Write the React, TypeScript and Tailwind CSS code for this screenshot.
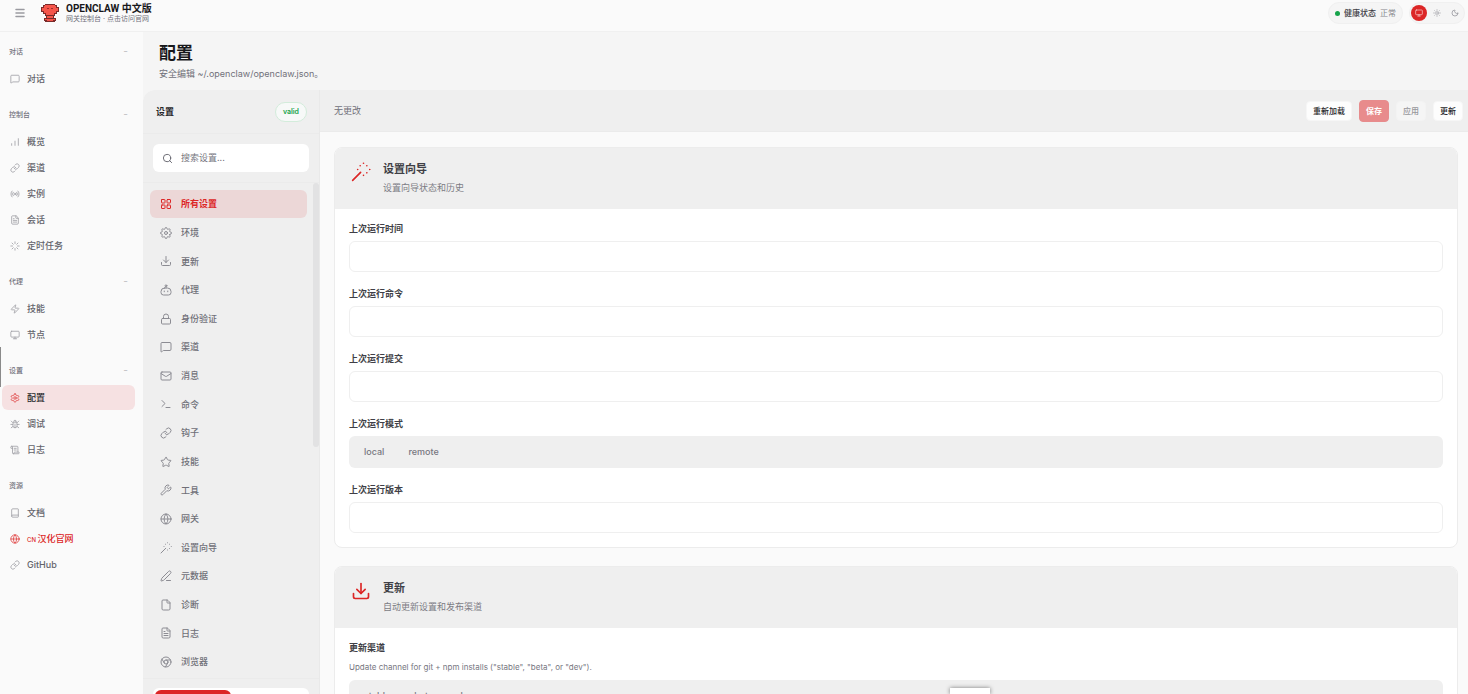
import type { ReactNode } from "react";
import {
  Book,
  Chrome,
  Download,
  File,
  FileText,
  Globe,
  LayoutGrid,
  Link as LinkIcon,
  Loader,
  Lock,
  Mail,
  Menu,
  MessageSquare,
  Monitor,
  Moon,
  PenLine,
  Radio,
  ScrollText,
  Search,
  Star,
  Sun,
  Terminal,
  Wrench,
  Zap,
  type LucideIcon,
} from "lucide-react";

type IconProps = { className?: string; strokeWidth?: number };
type IconType = LucideIcon | ((props: IconProps) => ReactNode);
type NavItem = { label: string; icon: IconType; active?: boolean; accent?: boolean };

function StrokeIcon({ className, strokeWidth = 2, children }: IconProps & { children: ReactNode }) {
  return (
    <svg
      className={className}
      viewBox="0 0 24 24"
      fill="none"
      stroke="currentColor"
      strokeWidth={strokeWidth}
      strokeLinecap="round"
      strokeLinejoin="round"
      aria-hidden="true"
    >
      {children}
    </svg>
  );
}

function BarsIcon(props: IconProps) {
  return (
    <StrokeIcon {...props}>
      <path d="M4 20v-4M12 20V10M20 20V4" />
    </StrokeIcon>
  );
}

function WandIcon(props: IconProps) {
  return (
    <StrokeIcon {...props}>
      <path d="M2 22l9.5-9.5" />
      <path d="M15 1.5h.01M19 4.5h.01M22.5 9h.01M19 13h.01M15 16h.01M11 4.5h.01M8 9h.01" />
    </StrokeIcon>
  );
}

function CogIcon(props: IconProps) {
  return (
    <StrokeIcon {...props}>
      <path d="M12.22 2h-.44a2 2 0 0 0-2 2v.18a2 2 0 0 1-1 1.73l-.43.25a2 2 0 0 1-2 0l-.15-.08a2 2 0 0 0-2.73.73l-.22.38a2 2 0 0 0 .73 2.73l.15.1a2 2 0 0 1 1 1.72v.51a2 2 0 0 1-1 1.74l-.15.09a2 2 0 0 0-.73 2.73l.22.38a2 2 0 0 0 2.73.73l.15-.08a2 2 0 0 1 2 0l.43.25a2 2 0 0 1 1 1.73V20a2 2 0 0 0 2 2h.44a2 2 0 0 0 2-2v-.18a2 2 0 0 1 1-1.73l.43-.25a2 2 0 0 1 2 0l.15.08a2 2 0 0 0 2.73-.73l.22-.39a2 2 0 0 0-.73-2.73l-.15-.08a2 2 0 0 1-1-1.74v-.5a2 2 0 0 1 1-1.74l.15-.09a2 2 0 0 0 .73-2.73l-.22-.38a2 2 0 0 0-2.73-.73l-.15.08a2 2 0 0 1-2 0l-.43-.25a2 2 0 0 1-1-1.73V4a2 2 0 0 0-2-2z" />
      <circle cx="12" cy="12" r="3" />
    </StrokeIcon>
  );
}

function GearIcon(props: IconProps) {
  return (
    <StrokeIcon {...props}>
      <circle cx="12" cy="12" r="3" />
      <path d="M19.4 15a1.65 1.65 0 0 0 .33 1.82l.06.06a2 2 0 1 1-2.83 2.83l-.06-.06a1.65 1.65 0 0 0-1.82-.33 1.65 1.65 0 0 0-1 1.51V21a2 2 0 0 1-4 0v-.09A1.65 1.65 0 0 0 9 19.4a1.65 1.65 0 0 0-1.82.33l-.06.06a2 2 0 1 1-2.83-2.83l.06-.06a1.65 1.65 0 0 0 .33-1.82 1.65 1.65 0 0 0-1.51-1H3a2 2 0 0 1 0-4h.09A1.65 1.65 0 0 0 4.6 9a1.65 1.65 0 0 0-.33-1.82l-.06-.06a2 2 0 1 1 2.83-2.83l.06.06a1.65 1.65 0 0 0 1.82.33H9a1.65 1.65 0 0 0 1-1.51V3a2 2 0 0 1 4 0v.09a1.65 1.65 0 0 0 1 1.51 1.65 1.65 0 0 0 1.82-.33l.06-.06a2 2 0 1 1 2.83 2.83l-.06.06a1.65 1.65 0 0 0-.33 1.82V9a1.65 1.65 0 0 0 1.51 1H21a2 2 0 0 1 0 4h-.09a1.65 1.65 0 0 0-1.51 1z" />
    </StrokeIcon>
  );
}

function RobotIcon(props: IconProps) {
  return (
    <StrokeIcon {...props}>
      <circle cx="12" cy="3.5" r="1.8" />
      <path d="M12 5.5V8M9 8h6a7 7 0 0 1 7 7v2a5 5 0 0 1-5 5H7a5 5 0 0 1-5-5v-2a7 7 0 0 1 7-7z" />
      <path d="M8.5 14v1.5M15.5 14v1.5" />
    </StrokeIcon>
  );
}

function BugIcon(props: IconProps) {
  return (
    <StrokeIcon {...props}>
      <rect x="7" y="7" width="10" height="14" rx="5" />
      <path d="M9 7V6a3 3 0 0 1 6 0v1M12 21v-9M2 13h5M17 13h5M3 21l4-3M21 21l-4-3M3 5l4 4M21 5l-4 4" />
    </StrokeIcon>
  );
}

function Logo() {
  return (
    <svg className="h-[18px] w-[18px]" viewBox="0 0 18 18" aria-hidden="true">
      <path fill="#7a2a2a" d="M4 0h10v1h2v2h2v5h-2v2h-2v2h-1v2h2v3h-1v1H4v-1H3v-3h2v-2H4v-2H2V8H0V3h2V1h2z" />
      <path fill="#f5554b" d="M4 1h10v1h1v2h2v3h-2v2h-2v2H5V9H3V7H1V4h2V2h1z" />
      <path fill="#f5554b" d="M6 12h6v2H6zM4 15h10v1H4zM6 16h6v1H6z" />
      <path fill="#9e302d" d="M6 4h2v1H6zM10 4h2v1h-2z" />
    </svg>
  );
}

const groups: { title: string; collapsible: boolean; items: NavItem[] }[] = [
  { title: "对话", collapsible: true, items: [{ label: "对话", icon: MessageSquare }] },
  {
    title: "控制台",
    collapsible: true,
    items: [
      { label: "概览", icon: BarsIcon },
      { label: "渠道", icon: LinkIcon },
      { label: "实例", icon: Radio },
      { label: "会话", icon: FileText },
      { label: "定时任务", icon: Loader },
    ],
  },
  {
    title: "代理",
    collapsible: true,
    items: [
      { label: "技能", icon: Zap },
      { label: "节点", icon: Monitor },
    ],
  },
  {
    title: "设置",
    collapsible: true,
    items: [
      { label: "配置", icon: CogIcon, active: true },
      { label: "调试", icon: BugIcon },
      { label: "日志", icon: ScrollText },
    ],
  },
  {
    title: "资源",
    collapsible: false,
    items: [
      { label: "文档", icon: Book },
      { label: "汉化官网", icon: Globe, accent: true },
      { label: "GitHub", icon: LinkIcon },
    ],
  },
];

const sections: NavItem[] = [
  { label: "所有设置", icon: LayoutGrid, active: true },
  { label: "环境", icon: GearIcon },
  { label: "更新", icon: Download },
  { label: "代理", icon: RobotIcon },
  { label: "身份验证", icon: Lock },
  { label: "渠道", icon: MessageSquare },
  { label: "消息", icon: Mail },
  { label: "命令", icon: Terminal },
  { label: "钩子", icon: LinkIcon },
  { label: "技能", icon: Star },
  { label: "工具", icon: Wrench },
  { label: "网关", icon: Globe },
  { label: "设置向导", icon: WandIcon },
  { label: "元数据", icon: PenLine },
  { label: "诊断", icon: File },
  { label: "日志", icon: FileText },
  { label: "浏览器", icon: Chrome },
];

function Topbar() {
  return (
    <header className="flex h-8 shrink-0 items-center justify-between border-b border-[#f0f0f0] bg-[#fafafa] pr-[3px] pb-[5px] pl-3.5">
      <div className="flex items-center gap-[15px]">
        <button type="button" aria-label="折叠侧边栏" className="text-[#9a9aa0]">
          <Menu className="h-3 w-3" strokeWidth={3} />
        </button>
        <a href="#home" className="flex items-center gap-[7px]">
          <Logo />
          <span className="flex flex-col">
            <span className="font-[Roboto,'Noto_Sans_CJK_SC',sans-serif] text-[10px] leading-3 font-bold text-[#18181b]">OPENCLAW 中文版</span>
            <span className="text-[7px] leading-2 text-[#71717a]">网关控制台 · 点击访问官网</span>
          </span>
        </a>
      </div>
      <div className="flex items-center gap-1.5">
        <div className="flex h-[22px] items-center gap-1 rounded-full border border-[#f0f0f0] bg-[#f5f5f5] px-1.5 text-[8px]">
          <span className="h-[5px] w-[5px] rounded-full bg-[#16a34a]" />
          <span className="font-medium text-[#3f3f46]">健康状态</span>
          <span className="text-[#85858c]">正常</span>
        </div>
        <div className="flex h-[22px] items-center gap-0.5 rounded-full border border-[#f0f0f0] bg-[#f5f5f5] px-px">
          <button type="button" aria-label="跟随系统" className="flex h-4 w-4 items-center justify-center rounded-full bg-[#dc2626] text-[#fbd5d5]">
            <Monitor className="h-2 w-2" />
          </button>
          <button type="button" aria-label="浅色" className="flex h-4 w-4 items-center justify-center text-[#9a9aa0]">
            <Sun className="h-2 w-2" />
          </button>
          <button type="button" aria-label="深色" className="flex h-4 w-4 items-center justify-center text-[#85858c]">
            <Moon className="h-2 w-2" />
          </button>
        </div>
      </div>
    </header>
  );
}

function SideNav() {
  return (
    <nav className="flex w-[143px] shrink-0 flex-col gap-3.5 overflow-hidden bg-[#fafafa] pt-2.5 pr-2 pl-0.5">
      {groups.map((group) => (
        <section key={group.title} className="flex flex-col gap-1">
          <div className="flex h-5 items-center justify-between pr-[7px] pl-[7px] text-[7px] font-medium text-[#71717a]">
            <span>{group.title}</span>
            {group.collapsible && <span className="text-[#b4b4b8]">−</span>}
          </div>
          <ul className="flex flex-col gap-px">
            {group.items.map(({ label, icon: Icon, active, accent }) => (
              <li key={label}>
                <a
                  href="#nav"
                  className={
                    active
                      ? "flex h-[25px] items-center gap-[7px] rounded-md bg-[#f6e1e2] pl-2 text-[9px] font-medium text-[#27272a]"
                      : accent
                        ? "flex h-[25px] items-center gap-[7px] pl-2 text-[9px] font-medium text-[#dc2626]"
                        : "flex h-[25px] items-center gap-[7px] pl-2 text-[9px] font-medium text-[#63636b]"
                  }
                >
                  <Icon
                    className={active || accent ? "h-2.5 w-2.5 text-[#e04545]" : "h-2.5 w-2.5 text-[#a0a0a6]"}
                    strokeWidth={2}
                  />
                  <span>
                    {accent && <span className="text-[6px]">CN </span>}
                    {label}
                  </span>
                </a>
              </li>
            ))}
          </ul>
        </section>
      ))}
    </nav>
  );
}

function SettingsPanel() {
  return (
    <aside className="flex w-[177px] shrink-0 flex-col border-r border-[#e9e9e9] bg-[#efefef]">
      <div className="flex h-11 shrink-0 items-center justify-between border-b border-[#ebebeb] pr-3 pl-[13px]">
        <h2 className="text-[9px] font-bold text-[#27272a]">设置</h2>
        <span className="flex h-5 items-center rounded-full border border-[#d3ecdb] bg-[#f7f9f8] px-[7px] font-[Inter,sans-serif] text-[7px] leading-none font-semibold text-[#16a34a]">
          valid
        </span>
      </div>
      <div className="shrink-0 border-b border-[#ebebeb] px-2.5 py-2.5">
        <label className="flex h-7 items-center gap-2 rounded-md bg-white pl-[9px]">
          <Search className="h-[11px] w-[11px] shrink-0 text-[#63636b]" strokeWidth={2} />
          <input
            type="text"
            aria-label="搜索设置"
            placeholder="搜索设置..."
            className="w-full min-w-0 bg-transparent text-[9px] outline-none placeholder:text-[#77777f]"
          />
        </label>
      </div>
      <div className="flex min-h-0 flex-1 justify-between">
        <ul className="flex flex-1 flex-col justify-between pt-[7px] pr-1.5 pb-0.5 pl-[7px]">
          {sections.map(({ label, icon: Icon, active }) => (
            <li key={label}>
              <button
                type="button"
                className={
                  active
                    ? "flex h-7 w-full items-center gap-[9px] rounded-md bg-[#ecd7d7] pl-2.5 text-[9px] font-bold text-[#dc2626]"
                    : "flex h-7 w-full items-center gap-[9px] pl-2.5 text-[9px] font-medium text-[#707078]"
                }
              >
                <Icon className={active ? "h-3 w-3" : "h-3 w-3 text-[#8c8c93]"} strokeWidth={2} />
                {label}
              </button>
            </li>
          ))}
        </ul>
        <span className="h-[264px] w-1.5 rounded-full bg-[#e2e2e3]" />
      </div>
      <div className="h-4 shrink-0 overflow-hidden border-t border-[#ebebeb] px-2.5 pt-[9px]">
        <div className="flex h-7 rounded-md bg-white p-0.5">
          <button type="button" aria-label="表单" className="w-1/2 rounded-md bg-[#dc2626]" />
          <button type="button" aria-label="原始" className="w-1/2" />
        </div>
      </div>
    </aside>
  );
}

function Toolbar() {
  return (
    <div className="flex h-[42px] shrink-0 items-center justify-between border-b border-[#ebebeb] bg-[#efefef] pr-[5px] pl-3.5">
      <span className="text-[9px] text-[#71717a]">无更改</span>
      <div className="flex items-center gap-[7px] text-[8px] font-medium">
        <button type="button" className="h-5 rounded border border-[#f6f6f6] bg-[#fdfdfd] px-1.5 text-[#27272a]">重新加载</button>
        <button type="button" disabled className="h-[22px] rounded border border-[#e78c8d] bg-[#e88b8c] px-1.5 font-bold text-white">保存</button>
        <button type="button" disabled className="h-5 rounded border border-[#f3f3f3] bg-[#f5f5f5] px-1.5 text-[#97979b]">应用</button>
        <button type="button" className="h-5 rounded border border-[#f6f6f6] bg-[#fdfdfd] px-1.5 text-[#27272a]">更新</button>
      </div>
    </div>
  );
}

function Card({ icon: Icon, title, desc, children }: { icon: IconType; title: string; desc: string; children: ReactNode }) {
  return (
    <section className="shrink-0 overflow-hidden rounded-lg border border-[#ececec] bg-white">
      <div className="flex h-[61px] items-center gap-3 bg-[#efefef] pl-4">
        <Icon className="mb-3.5 h-5 w-5 text-[#dc2626]" strokeWidth={2} />
        <div className="flex flex-col gap-[3px]">
          <h3 className="text-[11px] leading-4 font-bold text-[#3f3f46]">{title}</h3>
          <p className="text-[9px] leading-4 text-[#7c7c84]">{desc}</p>
        </div>
      </div>
      <div className="flex flex-col gap-4 px-3.5 py-3.5">{children}</div>
    </section>
  );
}

function TextField({ label, id }: { label: string; id: string }) {
  return (
    <div className="flex flex-col gap-1.5">
      <label htmlFor={id} className="text-[9px] leading-3 font-bold text-[#3f3f46]">{label}</label>
      <input id={id} type="text" className="h-[31px] w-full rounded-md border border-[#efefef] bg-white px-3 text-[9px] outline-none" />
    </div>
  );
}

function Segmented({ label, hint, options }: { label: string; hint?: string; options: string[] }) {
  return (
    <div role="group" aria-label={label} className="flex flex-col gap-1.5">
      <span className="text-[9px] leading-3 font-bold text-[#3f3f46]">{label}</span>
      {hint && <span className="text-[8px] leading-[14px] text-[#77777f]">{hint}</span>}
      <div className="flex h-8 items-center rounded-md bg-[#efefef] px-[3px]">
        {options.map((option) => (
          <button key={option} type="button" className="px-3 text-[9px] font-medium text-[#77777f]">
            {option}
          </button>
        ))}
      </div>
    </div>
  );
}

export default function App() {
  return (
    <div className="relative flex h-screen flex-col overflow-hidden bg-[#f5f5f5] font-[Inter,'Noto_Sans_CJK_SC',sans-serif]">
      <Topbar />
      <div className="flex min-h-0 flex-1">
        <SideNav />
        <main className="flex min-w-0 flex-1 flex-col">
          <div className="flex h-[58px] shrink-0 flex-col gap-[3px] pt-[9px] pl-4">
            <h1 className="text-[17px] leading-6 font-bold text-[#18181b]">配置</h1>
            <p className="text-[9px] leading-3 text-[#71717a]">安全编辑 ~/.openclaw/openclaw.json。</p>
          </div>
          <div className="flex min-h-0 flex-1 overflow-hidden rounded-tl-xl bg-[#fafafa]">
            <SettingsPanel />
            <div className="flex min-w-0 flex-1 flex-col">
              <Toolbar />
              <div className="flex min-h-0 flex-1 flex-col gap-[18px] overflow-hidden pt-[15px] pr-2.5 pl-3.5">
                <Card icon={WandIcon} title="设置向导" desc="设置向导状态和历史">
                  <TextField id="last-run-at" label="上次运行时间" />
                  <TextField id="last-run-command" label="上次运行命令" />
                  <TextField id="last-run-commit" label="上次运行提交" />
                  <Segmented label="上次运行模式" options={["local", "remote"]} />
                  <TextField id="last-run-version" label="上次运行版本" />
                </Card>
                <Card icon={Download} title="更新" desc="自动更新设置和发布渠道">
                  <Segmented
                    label="更新渠道"
                    hint={'Update channel for git + npm installs ("stable", "beta", or "dev").'}
                    options={["stable", "beta", "dev"]}
                  />
                </Card>
              </div>
            </div>
          </div>
        </main>
      </div>
      {/* window edge marker and dock popup */}
      <span className="absolute top-1/2 left-0 h-10 w-px bg-[#8a8a8a]" />
      <span className="absolute bottom-0 left-[950px] h-1.5 w-10 bg-white shadow-[0_0_4px_rgba(0,0,0,0.5)]" />
    </div>
  );
}
